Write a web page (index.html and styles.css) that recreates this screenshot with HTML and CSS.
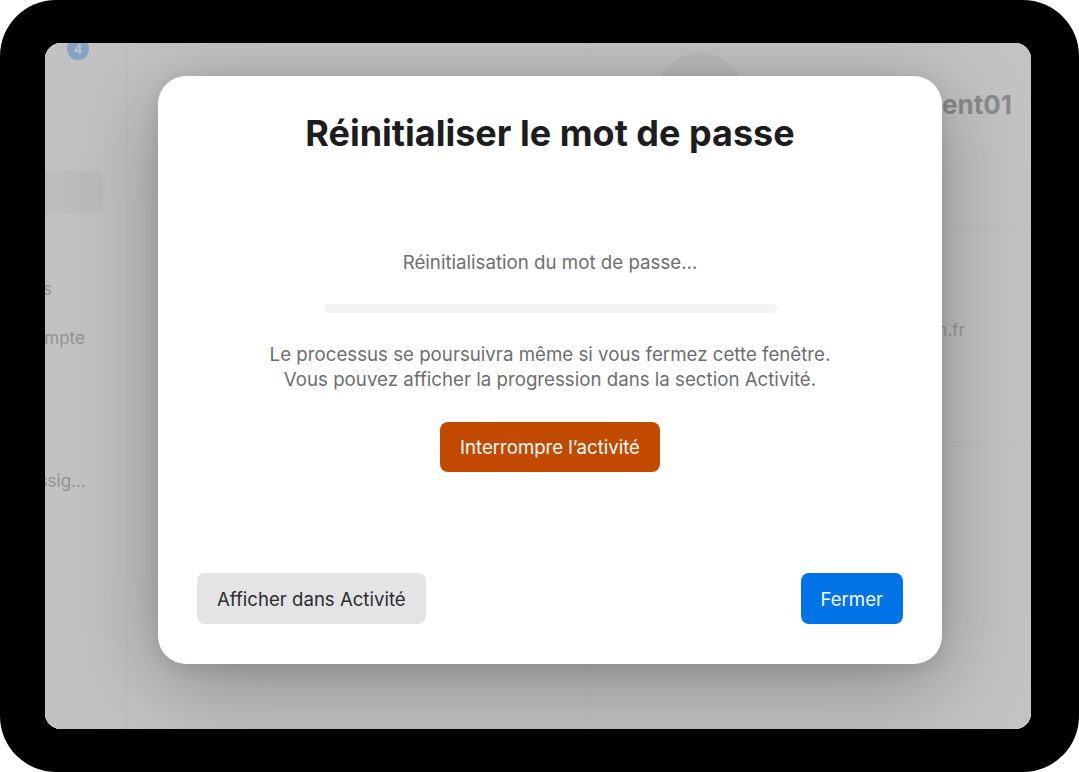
FILE: index.html
```html
<!DOCTYPE html>
<html lang="fr">
<head>
<meta charset="utf-8">
<title>Réinitialiser le mot de passe</title>
<link rel="stylesheet" href="styles.css">
</head>
<body>
<div class="device">
  <div class="screen">
    <aside class="sidebar">
      <span class="badge">4</span>
      <div class="sidebar-inner">
        <div class="nav-item selected">Utilisateurs</div>
        <div class="nav-item classes">Classes</div>
        <div class="nav-item account">Mon compte</div>
        <div class="nav-item assign">Nouvelles assig…</div>
      </div>
      <div class="sidebar-footer"></div>
    </aside>
    <section class="list"></section>
    <section class="detail">
      <header class="detail-head">
        <div class="avatar"></div>
        <h2 class="name">Student01</h2>
      </header>
      <div class="detail-row">
        <span class="label">Identifiant géré</span>
        <span class="value">student01@ac-lyon.fr</span>
      </div>
      <div class="detail-row last"></div>
    </section>

    <div class="scrim">
      <div class="modal" role="dialog" aria-labelledby="modal-title">
        <h1 id="modal-title" class="modal-title">Réinitialiser le mot de passe</h1>
        <div class="modal-body">
          <p class="status">Réinitialisation du mot de passe…</p>
          <div class="progress"><div class="progress-fill" style="width: 0%"></div></div>
          <p class="note">Le processus se poursuivra même si vous fermez cette fenêtre.<br>Vous pouvez afficher la progression dans la section Activité.</p>
          <button class="btn btn-stop">Interrompre l’activité</button>
        </div>
        <footer class="modal-actions">
          <button class="btn btn-secondary">Afficher dans Activité</button>
          <button class="btn btn-primary">Fermer</button>
        </footer>
      </div>
    </div>
  </div>
</div>
</body>
</html>
```

FILE: styles.css
```css
* { box-sizing: border-box; }

html, body {
  margin: 0;
  height: 100%;
  background: #ffffff;
}

body {
  font-family: Inter, "Noto Sans", "Liberation Sans", sans-serif;
  color: #1d1d1f;
}

/* black tablet bezel */
.device {
  width: 1079px;
  height: 772px;
  background: #000;
  border-radius: 56px;
  padding: 43px 48px 43px 45px;
}

.screen {
  position: relative;
  display: flex;
  width: 100%;
  height: 100%;
  border-radius: 16px;
  overflow: hidden;
  background: #fff;
}

/* ---------- sidebar ---------- */
.sidebar {
  position: relative;
  width: 83px;
  flex: none;
  display: flex;
  flex-direction: column;
  background: #fbfbfa;
  border-right: 1px solid #ececec;
  overflow: hidden;
}

.badge {
  position: absolute;
  left: 22px;
  top: -5px;
  width: 22px;
  height: 22px;
  border-radius: 50%;
  background: #0a78ff;
  color: #fff;
  font-size: 13px;
  font-weight: 600;
  display: flex;
  align-items: center;
  justify-content: center;
}

.sidebar-inner {
  display: flex;
  flex-direction: column;
  margin-left: -48px;
  padding-top: 127px;
  flex: 1;
}

.nav-item {
  font-size: 17px;
  color: #3a3a3a;
  white-space: nowrap;
  height: 49px;
  display: flex;
  align-items: center;
}

.nav-item.selected {
  width: 106px;
  height: 43px;
  border-radius: 10px;
  background: #e2e2e2;
  color: transparent;
  margin-bottom: 51px;
}

.nav-item.classes { margin-left: -8px; }
.nav-item.account { margin-left: -13px; }
.nav-item.assign { margin-top: 94px; margin-left: -52px; }

.sidebar-footer {
  height: 78px;
  border-top: 1px solid #f2f2f2;
  background: #fcfcfc;
}

/* ---------- list column ---------- */
.list {
  width: 462px;
  flex: none;
  background: #fefefe;
  border-right: 1px solid #ececec;
}

/* ---------- detail column ---------- */
.detail {
  flex: 1;
  display: flex;
  flex-direction: column;
  background: #fff;
}

.detail-head {
  height: 182px;
  display: flex;
  align-items: flex-start;
  padding: 10px 19px 0 64px;
  border-bottom: 1px solid #e8e8e8;
}

.avatar {
  width: 92px;
  height: 92px;
  border-radius: 50%;
  background: #e4e4e4;
  flex: none;
}

.name {
  margin: 36px 0 0 auto;
  font-size: 26px;
  font-weight: 700;
  color: #1d1d1f;
}

.detail-row {
  height: 221px;
  display: flex;
  align-items: center;
  justify-content: space-between;
  padding: 0 66px 10px 20px;
  border-bottom: 1px solid #f0f0f0;
  font-size: 17px;
}

.detail-row.last { border-bottom: none; }

.detail-row .label { color: #1d1d1f; }
.detail-row .value { color: #575757; }

/* ---------- dimmed layer + dialog ---------- */
.scrim {
  position: absolute;
  inset: 0;
  background: rgba(175, 175, 175, 0.75);
  display: flex;
  align-items: flex-start;
  padding: 33px 0 0 113px;
}

.modal {
  width: 784px;
  height: 588px;
  background: #fff;
  border-radius: 28px;
  box-shadow: 0 20px 90px rgba(0, 0, 0, 0.3), 0 4px 18px rgba(0, 0, 0, 0.1);
  display: flex;
  flex-direction: column;
  padding: 0 39px 40px;
}

.modal-title {
  margin: 37px 0 0;
  text-align: center;
  font-size: 36px;
  font-weight: 700;
  line-height: 40px;
  color: #1d1d1f;
  letter-spacing: 0;
}

.modal-body {
  flex: 1;
  display: flex;
  flex-direction: column;
  align-items: center;
}

.status {
  margin: 98px 0 0;
  font-size: 18.7px;
  line-height: 24px;
  color: #6e6e70;
}

.progress {
  margin-top: 29px;
  width: 453px;
  height: 9px;
  border-radius: 5px;
  background: #f3f3f3;
  overflow: hidden;
}

.progress-fill {
  height: 100%;
  background: #0071e3;
}

.note {
  margin: 29px 0 0;
  text-align: center;
  font-size: 18.7px;
  line-height: 25px;
  color: #6e6e70;
}

.btn {
  font-family: inherit;
  font-size: 18.6px;
  border: none;
  border-radius: 8px;
  height: 51px;
  padding: 0 20px;
  cursor: pointer;
}

.btn-stop {
  margin-top: 30px;
  height: 50px;
  background: #c14a00;
  color: #fff;
}

.modal-actions {
  display: flex;
  justify-content: space-between;
  align-items: center;
}

.btn-secondary {
  background: #e4e4e7;
  color: #2c2c2e;
}

.btn-primary {
  background: #0073e6;
  color: #fff;
}
```
